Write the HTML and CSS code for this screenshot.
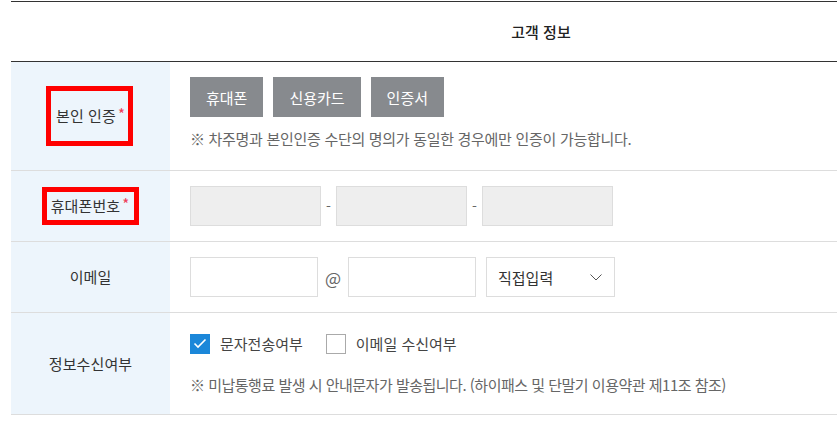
FILE: index.html
```html
<!DOCTYPE html>
<html lang="ko">
<head>
<meta charset="utf-8">
<title>고객 정보</title>
<link rel="stylesheet" href="styles.css">
</head>
<body>
<div class="form">
  <div class="head">고객 정보</div>

  <div class="row row-auth">
    <div class="label"><span class="mark mark-auth">본인 인증<i class="req">*</i></span></div>
    <div class="field">
      <div class="btns">
        <button class="btn" type="button">휴대폰</button>
        <button class="btn" type="button">신용카드</button>
        <button class="btn" type="button">인증서</button>
      </div>
      <p class="note">※ 차주명과 본인인증 수단의 명의가 동일한 경우에만 인증이 가능합니다.</p>
    </div>
  </div>

  <div class="row row-mid">
    <div class="label"><span class="mark mark-phone">휴대폰번호<i class="req">*</i></span></div>
    <div class="field inline">
      <input class="inp inp-dis" type="text" disabled>
      <span class="sep">-</span>
      <input class="inp inp-dis" type="text" disabled>
      <span class="sep">-</span>
      <input class="inp inp-dis" type="text" disabled>
    </div>
  </div>

  <div class="row row-mid">
    <div class="label"><span class="plain">이메일</span></div>
    <div class="field inline">
      <input class="inp inp-mail" type="text">
      <span class="at">@</span>
      <input class="inp inp-mail" type="text">
      <div class="select">
        <span>직접입력</span>
        <svg class="chev" width="12" height="7" viewBox="0 0 12 7"><polyline points="0.5,0.5 6,6 11.5,0.5" fill="none" stroke="#555" stroke-width="1"/></svg>
      </div>
    </div>
  </div>

  <div class="row row-recv">
    <div class="label"><span class="plain">정보수신여부</span></div>
    <div class="field">
      <div class="checks">
        <label class="chk">
          <span class="box on"><svg width="14" height="11" viewBox="0 0 14 11"><polyline points="1.5,5.5 5,9 12.5,1.5" fill="none" stroke="#fff" stroke-width="1.6"/></svg></span>
          <span class="chk-txt">문자전송여부</span>
        </label>
        <label class="chk">
          <span class="box"></span>
          <span class="chk-txt">이메일 수신여부</span>
        </label>
      </div>
      <p class="note note2">※ 미납통행료 발생 시 안내문자가 발송됩니다. (하이패스 및 단말기 이용약관 제11조 참조)</p>
    </div>
  </div>
</div>
</body>
</html>
```

FILE: styles.css
```css
html, body {
  margin: 0;
  padding: 0;
  background: #fff;
}
body {
  font-family: "Noto Sans CJK KR", "Noto Sans", sans-serif;
  color: #333;
  overflow: hidden;
}
.form {
  margin: 1px 0 0 11px;
  width: 826px;
}
.head {
  border-top: 1px solid #333;
  border-bottom: 1px solid #333;
  height: 59px;
  line-height: 59px;
  box-sizing: content-box;
  padding-left: 234px;
  text-align: center;
  font-size: 15px;
  font-weight: 500;
  color: #222;
}
.row {
  display: grid;
  grid-template-columns: 159px 1fr;
  border-bottom: 1px solid #ddd;
}
.row-auth { height: 108px; }
.row-mid { height: 70px; }
.row-recv { height: 101px; }
.label {
  background: #edf5fc;
  display: flex;
  align-items: center;
  justify-content: center;
  font-size: 15px;
  letter-spacing: 0.1px;
  color: #333;
}
.mark {
  border: 5px solid #f00;
  display: inline-block;
  line-height: 20px;
}
.mark-auth { padding: 15px 3px 15px 5px; margin-left: -2px; }
.mark-phone { padding: 4px 5px 4px 4px; }
.plain { line-height: 20px; }
.req {
  font-style: normal;
  color: #ee3b57;
  font-size: 15px;
  position: relative;
  top: -2px;
  margin-left: 2px;
}
.field {
  padding-left: 20px;
  display: flex;
  flex-direction: column;
}
.field.inline {
  flex-direction: row;
  align-items: center;
}
.btns {
  display: flex;
  gap: 10px;
  margin-top: 15px;
}
.btn {
  height: 40px;
  padding: 0 16px;
  border: 0;
  background: #878a8e;
  color: #fff;
  font-family: inherit;
  font-size: 15px;
  letter-spacing: 0;
}
.note {
  margin: 12px 0 0;
  font-size: 15px;
  line-height: 20px;
  letter-spacing: -0.3px;
  color: #666;
}
.inp {
  box-sizing: border-box;
  height: 40px;
  border: 1px solid #ddd;
  margin: 0;
  padding: 0 10px;
  font-family: inherit;
  background: #fff;
}
.inp-dis {
  width: 131px;
  background: #eee;
}
.sep {
  width: 15px;
  text-align: center;
  font-size: 14px;
  color: #666;
}
.inp-mail { width: 128px; }
.at {
  width: 30px;
  text-align: center;
  font-size: 17px;
  color: #666;
}
.select {
  box-sizing: border-box;
  margin-left: 10px;
  width: 129px;
  height: 40px;
  border: 1px solid #ddd;
  display: flex;
  align-items: center;
  justify-content: space-between;
  padding: 0 12px 0 11px;
  font-size: 15px;
  color: #333;
}
.chev { margin-top: 1px; }
.checks {
  display: flex;
  align-items: center;
  margin-top: 20px;
  gap: 23px;
}
.chk {
  display: flex;
  align-items: center;
  gap: 10px;
}
.box {
  box-sizing: border-box;
  width: 20px;
  height: 20px;
  border: 1px solid #aaa;
  background: #fff;
  display: flex;
  align-items: center;
  justify-content: center;
}
.box.on {
  background: #1b87d9;
  border-color: #1b87d9;
}
.chk-txt {
  font-size: 15px;
  color: #444;
}
.note2 {
  margin-top: 21px;
  letter-spacing: -0.5px;
}
```
